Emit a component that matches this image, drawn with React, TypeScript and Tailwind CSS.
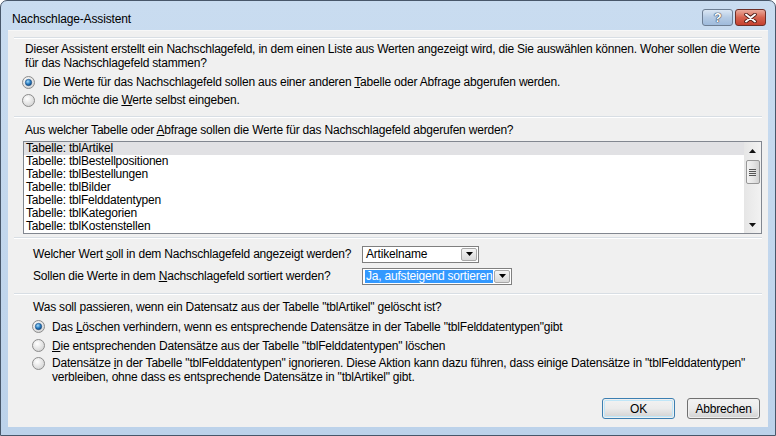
import React from "react";

const font = "font-['Liberation_Sans',Arial,sans-serif]";

function Radio({ checked }: { checked?: boolean }) {
    return (
        <svg width="13" height="13" viewBox="0 0 13 13" className="shrink-0">
            <defs>
                <radialGradient id="rbg" cx="40%" cy="35%" r="75%">
                    <stop offset="0" stopColor="#ffffff" />
                    <stop offset="1" stopColor="#cfcfcf" />
                </radialGradient>
                <radialGradient id="rdot" cx="40%" cy="35%" r="70%">
                    <stop offset="0" stopColor="#a8dcfa" />
                    <stop offset="0.55" stopColor="#2a7fc4" />
                    <stop offset="1" stopColor="#0c3c70" />
                </radialGradient>
            </defs>
            <circle cx="6.5" cy="6.5" r="6" fill="url(#rbg)" stroke="#8c8c8c" />
            {checked && <circle cx="6.5" cy="6.5" r="3.2" fill="url(#rdot)" stroke="#1d4f85" strokeWidth="0.6" />}
        </svg>
    );
}

function Separator() {
    return <div className="mx-[6px] h-[2px] border-t border-[#d8dee4] border-b border-b-white" />;
}

function DropArrow() {
    return (
        <div className="w-[16px] h-full shrink-0 flex items-center justify-center border border-[#a7a7a7] rounded-[2px] bg-gradient-to-b from-[#f4f4f4] to-[#d9d9d9]">
            <svg width="7" height="4" viewBox="0 0 7 4">
                <path d="M0 0 H7 L3.5 4 Z" fill="#000" />
            </svg>
        </div>
    );
}

function Combo({ value, width, selected }: { value: string; width: string; selected?: boolean }) {
    return (
        <div className={`${width} h-[17px] bg-white border border-[#7f7f7f] flex items-stretch p-[1px] shrink-0`}>
            <div className="flex-1 flex items-center pl-[1px] overflow-hidden whitespace-nowrap">
                <span className={selected ? "bg-[#3399ff] text-white px-[1px] leading-[13px]" : "px-[1px] leading-[13px]"}>{value}</span>
            </div>
            <DropArrow />
        </div>
    );
}

function Button({ label, primary }: { label: string; primary?: boolean }) {
    return (
        <div className={`w-[73px] h-[21px] rounded-[3px] border ${primary ? "border-[#3c7fb1]" : "border-[#707070]"} p-[1px]`}>
            <div className={`w-full h-full rounded-[2px] flex items-center justify-center bg-gradient-to-b from-[#f2f2f2] via-[#ebebeb] to-[#d4d4d4] ${primary ? "ring-1 ring-inset ring-[#bfe6f8]" : ""}`}>
                {label}
            </div>
        </div>
    );
}

const tables = [
    "tblArtikel",
    "tblBestellpositionen",
    "tblBestellungen",
    "tblBilder",
    "tblFelddatentypen",
    "tblKategorien",
    "tblKostenstellen",
];

function Scrollbar() {
    return (
        <div className="w-[17px] h-full bg-gradient-to-r from-[#e6e6e6] to-[#f2f2f2] flex flex-col items-center">
            <div className="h-[17px] w-full flex items-center justify-center">
                <svg width="7" height="4" viewBox="0 0 7 4">
                    <path d="M3.5 0 L7 4 H0 Z" fill="#111" />
                </svg>
            </div>
            <div className="mt-[1px] w-[14px] h-[24px] rounded-[2px] border border-[#979797] bg-gradient-to-r from-[#f3f3f3] via-[#e6e6e6] to-[#d2d2d2] flex flex-col items-center justify-center gap-[1px]">
                <div className="w-[7px] h-[1px] bg-[#555]" />
                <div className="w-[7px] h-[1px] bg-[#555]" />
                <div className="w-[7px] h-[1px] bg-[#555]" />
                <div className="w-[7px] h-[1px] bg-[#555]" />
            </div>
            <div className="flex-1" />
            <div className="h-[17px] w-full flex items-center justify-center">
                <svg width="7" height="4" viewBox="0 0 7 4">
                    <path d="M0 0 H7 L3.5 4 Z" fill="#111" />
                </svg>
            </div>
        </div>
    );
}

export default function App() {
    return (
        <div className={`w-[776px] h-[436px] flex flex-col border border-[#48576a] rounded-t-[7px] bg-gradient-to-b from-[#c9dcf0] to-[#bcd2ea] text-[12px] tracking-[-0.2px] text-black ${font} overflow-hidden whitespace-nowrap`}>
            {/* title bar */}
            <div className="h-[29px] flex items-start justify-between shrink-0">
                <div className="pl-[11px] pt-[11px] leading-[14px] text-[12px] tracking-[-0.15px] text-black">Nachschlage-Assistent</div>
                <div className="flex gap-[2px] pt-[8px] pr-[9px]">
                    <div className="w-[31px] h-[17px] rounded-[3px] border border-[#6d7e93] bg-gradient-to-b from-[#dbe7f4] via-[#b5cbe4] to-[#9fbbdc] flex items-center justify-center">
                        <span className="font-bold text-[13px] leading-[13px] text-white [text-shadow:0_0_1px_#2d3b4c,0_0_1px_#2d3b4c,0_0_1px_#2d3b4c]">?</span>
                    </div>
                    <div className="w-[31px] h-[17px] rounded-[3px] border border-[#6e2f27] bg-gradient-to-b from-[#e9a99b] via-[#d6634f] to-[#c4402f] flex items-center justify-center">
                        <svg width="13" height="10" viewBox="0 0 13 10">
                            <path d="M2 1.5 L11 8.5 M11 1.5 L2 8.5" stroke="#4a1a14" strokeWidth="3.6" strokeLinecap="round" />
                            <path d="M2 1.5 L11 8.5 M11 1.5 L2 8.5" stroke="#ffffff" strokeWidth="2" strokeLinecap="round" />
                        </svg>
                    </div>
                </div>
            </div>

            {/* client area */}
            <div className="flex-1 mx-[7px] mb-[8px] bg-[#f0f0f0] border-t border-[#f7f7f7] flex flex-col">
                <div className="mt-[6px]"><Separator /></div>

                <p className="mt-[3px] pl-[17px] leading-[14px]">
                    Dieser Assistent erstellt ein Nachschlagefeld, in dem einen Liste aus Werten angezeigt wird, die Sie auswählen können. Woher sollen die Werte<br />
                    für das Nachschlagefeld stammen?
                </p>

                <div className="mt-[3px] pl-[14px] h-[18px] flex items-center gap-[8px]">
                    <Radio checked />
                    <span>Die Werte für das Nachschlagefeld sollen aus einer anderen <u>T</u>abelle oder Abfrage abgerufen werden.</span>
                </div>
                <div className="pl-[14px] h-[18px] flex items-center gap-[8px]">
                    <Radio />
                    <span>Ich möchte die <u>W</u>erte selbst eingeben.</span>
                </div>

                <div className="mt-[7px]"><Separator /></div>

                <div className="mt-[5px] pl-[17px] leading-[14px]">
                    Aus welcher Tabelle oder <u>A</u>bfrage sollen die Werte für das Nachschlagefeld abgerufen werden?
                </div>

                <div className="mt-[4px] ml-[15px] mr-[6px] h-[93px] border border-[#828790] bg-white flex">
                    <div className="flex-1 flex flex-col">
                        {tables.map((t, i) => (
                            <div key={t} className={`h-[13px] leading-[13px] pl-[2px] ${i === 0 ? "bg-[#e1e1e4]" : ""}`}>
                                Tabelle: {t}
                            </div>
                        ))}
                    </div>
                    <Scrollbar />
                </div>

                <div className="mt-[3px]"><Separator /></div>

                <div className="mt-[6px] pl-[25px] flex items-center">
                    <div className="w-[329px]">Welcher Wert <u>s</u>oll in dem Nachschlagefeld angezeigt werden?</div>
                    <Combo value="Artikelname" width="w-[117px]" />
                </div>
                <div className="mt-[4px] pl-[25px] flex items-center">
                    <div className="w-[329px]">Sollen die Werte in dem <u>N</u>achschlagefeld sortiert werden?</div>
                    <Combo value="Ja, aufsteigend sortieren" width="w-[150px]" selected />
                </div>

                <div className="mt-[8px]"><Separator /></div>

                <div className="mt-[5px] pl-[25px] leading-[14px]">
                    Was soll passieren, wenn ein Datensatz aus der Tabelle "tblArtikel" gelöscht ist?
                </div>

                <div className="mt-[3px] pl-[24px] h-[19px] flex items-center gap-[7px]">
                    <Radio checked />
                    <span>Das <u>L</u>öschen verhindern, wenn es entsprechende Datensätze in der Tabelle "tblFelddatentypen"gibt</span>
                </div>
                <div className="pl-[24px] h-[19px] flex items-center gap-[7px]">
                    <Radio />
                    <span><u>D</u>ie entsprechenden Datensätze aus der Tabelle "tblFelddatentypen" löschen</span>
                </div>
                <div className="pl-[24px] flex items-start gap-[7px] pt-[1px]">
                    <div className="pt-[1px]"><Radio /></div>
                    <span className="leading-[14px]">
                        Datensätze <u>i</u>n der Tabelle "tblFelddatentypen" ignorieren. Diese Aktion kann dazu führen, dass einige Datensätze in "tblFelddatentypen"<br />
                        verbleiben, ohne dass es entsprechende Datensätze in "tblArtikel" gibt.
                    </span>
                </div>

                <div className="mt-[14px] pr-[8px] flex justify-end gap-[12px]">
                    <Button label="OK" primary />
                    <Button label="Abbrechen" />
                </div>
            </div>
        </div>
    );
}
